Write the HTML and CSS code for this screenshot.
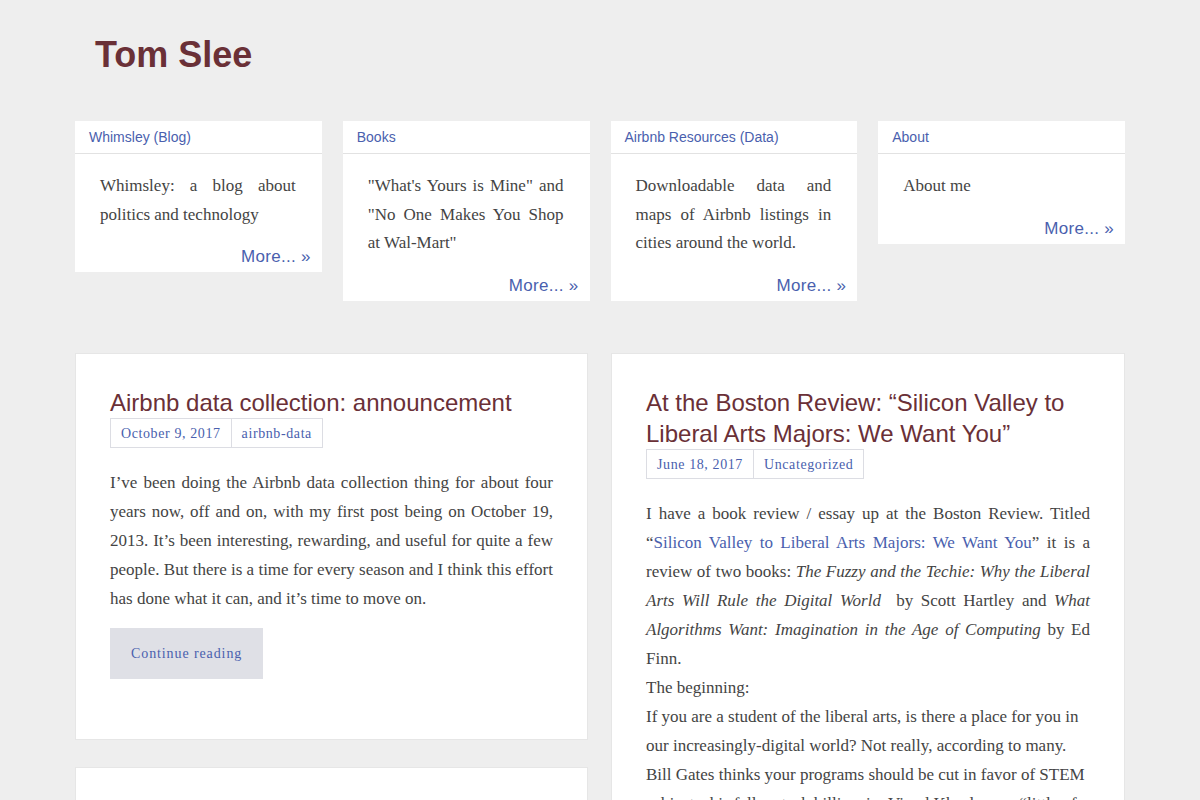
FILE: index.html
```html
<!DOCTYPE html>
<html lang="en">
<head>
    <meta charset="UTF-8">
    <meta name="viewport" content="width=device-width, initial-scale=1.0">
    <title>Tom Slee</title>
    <link rel="stylesheet" href="styles.css">
</head>
<body>
    <div class="site">
        <header class="masthead">
            <h1 class="site-title"><a href="#">Tom Slee</a></h1>
        </header>

        <section class="widgets">
            <div class="widget">
                <h3 class="widget-title"><a href="#">Whimsley (Blog)</a></h3>
                <div class="widget-body">
                    <p>Whimsley: a blog about politics and technology</p>
                    <a class="more" href="#">More... &raquo;</a>
                </div>
            </div>
            <div class="widget">
                <h3 class="widget-title"><a href="#">Books</a></h3>
                <div class="widget-body">
                    <p>"What's Yours is Mine" and "No One Makes You Shop at Wal-Mart"</p>
                    <a class="more" href="#">More... &raquo;</a>
                </div>
            </div>
            <div class="widget">
                <h3 class="widget-title"><a href="#">Airbnb Resources (Data)</a></h3>
                <div class="widget-body">
                    <p>Downloadable data and maps of Airbnb listings in cities around the world.</p>
                    <a class="more" href="#">More... &raquo;</a>
                </div>
            </div>
            <div class="widget">
                <h3 class="widget-title"><a href="#">About</a></h3>
                <div class="widget-body">
                    <p>About me</p>
                    <a class="more" href="#">More... &raquo;</a>
                </div>
            </div>
        </section>

        <main class="posts">
            <div class="post-column">
                <article class="post">
                    <h2 class="post-title"><a href="#">Airbnb data collection: announcement</a></h2>
                    <div class="post-meta">
                        <a href="#">October 9, 2017</a>
                        <a href="#">airbnb-data</a>
                    </div>
                    <div class="post-content">
                        <p class="justify">I&rsquo;ve been doing the Airbnb data collection thing for about four years now, off and on, with my first post being on October 19, 2013. It&rsquo;s been interesting, rewarding, and useful for quite a few people. But there is a time for every season and I think this effort has done what it can, and it&rsquo;s time to move on.</p>
                        <a class="continue" href="#">Continue reading</a>
                    </div>
                </article>
                <article class="post">
                    <h2 class="post-title"><a href="#">Airbnb in Toronto</a></h2>
                </article>
            </div>

            <div class="post-column">
                <article class="post">
                    <h2 class="post-title"><a href="#">At the Boston Review: &ldquo;Silicon Valley to Liberal Arts Majors: We Want You&rdquo;</a></h2>
                    <div class="post-meta">
                        <a href="#">June 18, 2017</a>
                        <a href="#">Uncategorized</a>
                    </div>
                    <div class="post-content">
                        <p class="justify">I have a book review / essay up at the Boston Review. Titled &ldquo;<a href="#">Silicon Valley to Liberal Arts Majors: We Want You</a>&rdquo; it is a review of two books: <em>The Fuzzy and the Techie: Why the Liberal Arts Will Rule the Digital World</em>&nbsp; by Scott Hartley and <em>What Algorithms Want: Imagination in the Age of Computing</em> by Ed Finn.</p>
                        <p>The beginning:</p>
                        <p>If you are a student of the liberal arts, is there a place for you in our increasingly-digital world? Not really, according to many. Bill Gates thinks your programs should be cut in favor of STEM subjects; his fellow tech billionaire Vinod Khosla says &ldquo;little of the material taught in liberal arts programs today is relevant to the future.&rdquo;</p>
                    </div>
                </article>
            </div>
        </main>
    </div>
</body>
</html>
```

FILE: styles.css
```css
body {
    margin: 0;
    background-color: #eeeeee;
    font-family: "Liberation Serif", serif;
    color: #444;
}
a {
    color: #4a5fae;
    text-decoration: none;
}
.site {
    width: 1050px;
    margin: 0 auto;
}
.masthead {
    padding: 33px 20px 0 20px;
    height: 88px;
}
.site-title {
    margin: 0;
    font-family: "Liberation Sans", sans-serif;
    font-size: 36px;
    line-height: 44px;
    font-weight: bold;
}
.site-title a {
    color: #6a3037;
}

/* top widgets */
.widgets {
    display: grid;
    grid-template-columns: repeat(4, 1fr);
    column-gap: 21px;
    align-items: start;
}
.widget {
    background-color: white;
}
.widget-title {
    margin: 0;
    height: 33px;
    line-height: 32px;
    padding: 0 14px;
    font-family: "Liberation Sans", sans-serif;
    font-size: 14px;
    font-weight: normal;
    border-bottom: 1px solid #e2e2e2;
    box-sizing: border-box;
}
.widget-body {
    padding: 18px 11px 0 25px;
}
.widget-body p {
    margin: 0 15px 13px 0;
    font-size: 17px;
    line-height: 28.7px;
    text-align: justify;
}
.more {
    display: block;
    text-align: right;
    font-family: "Liberation Sans", sans-serif;
    font-size: 17px;
    line-height: 29px;
    letter-spacing: 0.3px;
    padding-bottom: 1px;
}

/* posts */
.posts {
    display: grid;
    grid-template-columns: 513px 514px;
    column-gap: 23px;
    margin-top: 52px;
    align-items: start;
}
.post-column {
    display: flex;
    flex-direction: column;
    gap: 27px;
}
.post {
    background-color: white;
    border: 1px solid #e6e6e6;
    padding: 33px 34px 60px 34px;
}
.post-title {
    margin: 0;
    font-family: "Liberation Sans", sans-serif;
    font-size: 24px;
    line-height: 31px;
    font-weight: normal;
}
.post-title a {
    color: #6a3037;
}
.post-meta {
    display: flex;
}
.post-meta a {
    display: block;
    border: 1px solid #dcdde3;
    padding: 0 10px;
    height: 30px;
    line-height: 29px;
    box-sizing: border-box;
    font-size: 14px;
    letter-spacing: 0.6px;
}
.post-meta a + a {
    border-left: none;
}
.post-content {
    margin-top: 20px;
}
.post-content p {
    margin: 0;
    font-size: 17px;
    line-height: 29px;
}
.post-content .justify {
    text-align: justify;
}
.continue {
    display: inline-block;
    margin-top: 15px;
    padding: 16px 21px;
    background-color: #dfe0e6;
    font-size: 14px;
    line-height: 19px;
    letter-spacing: 0.9px;
}
```
